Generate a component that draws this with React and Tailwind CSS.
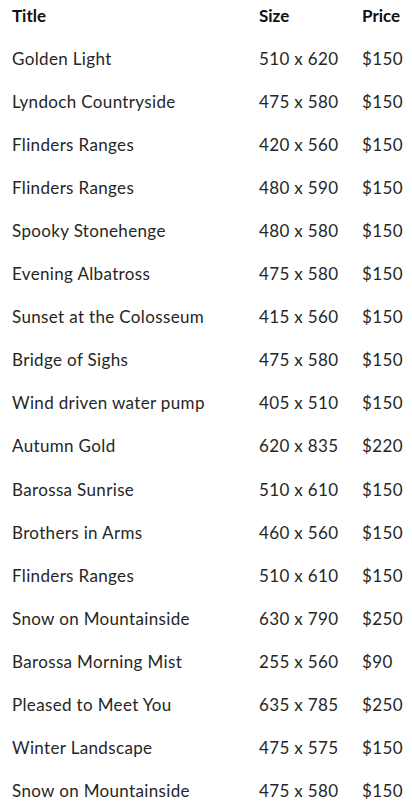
import React from 'react';

const rows = [
  ['Golden Light', '510 x 620', '$150'],
  ['Lyndoch Countryside', '475 x 580', '$150'],
  ['Flinders Ranges', '420 x 560', '$150'],
  ['Flinders Ranges', '480 x 590', '$150'],
  ['Spooky Stonehenge', '480 x 580', '$150'],
  ['Evening Albatross', '475 x 580', '$150'],
  ['Sunset at the Colosseum', '415 x 560', '$150'],
  ['Bridge of Sighs', '475 x 580', '$150'],
  ['Wind driven water pump', '405 x 510', '$150'],
  ['Autumn Gold', '620 x 835', '$220'],
  ['Barossa Sunrise', '510 x 610', '$150'],
  ['Brothers in Arms', '460 x 560', '$150'],
  ['Flinders Ranges', '510 x 610', '$150'],
  ['Snow on Mountainside', '630 x 790', '$250'],
  ['Barossa Morning Mist', '255 x 560', '$90'],
  ['Pleased to Meet You', '635 x 785', '$250'],
  ['Winter Landscape', '475 x 575', '$150'],
  ['Snow on Mountainside', '475 x 580', '$150'],
];

function Row({ cells, head }) {
  return (
    <div
      className={`grid grid-cols-[247px_103px_1fr] h-[43.06px] items-center ${
        head ? 'font-bold text-[#111] tracking-[0px]' : 'text-[#262626] tracking-[0.35px]'
      }`}
    >
      {cells.map((c, i) => (
        <div key={i} className="whitespace-nowrap">
          {c}
        </div>
      ))}
    </div>
  );
}

export default function App() {
  return (
    <div className="w-[412px] h-[810px] overflow-hidden bg-white pl-3 -mt-[6px] font-['Lato',sans-serif] text-[17px] leading-none">
      <Row cells={['Title', 'Size', 'Price']} head />
      {rows.map((r, i) => (
        <Row key={i} cells={r} />
      ))}
    </div>
  );
}
